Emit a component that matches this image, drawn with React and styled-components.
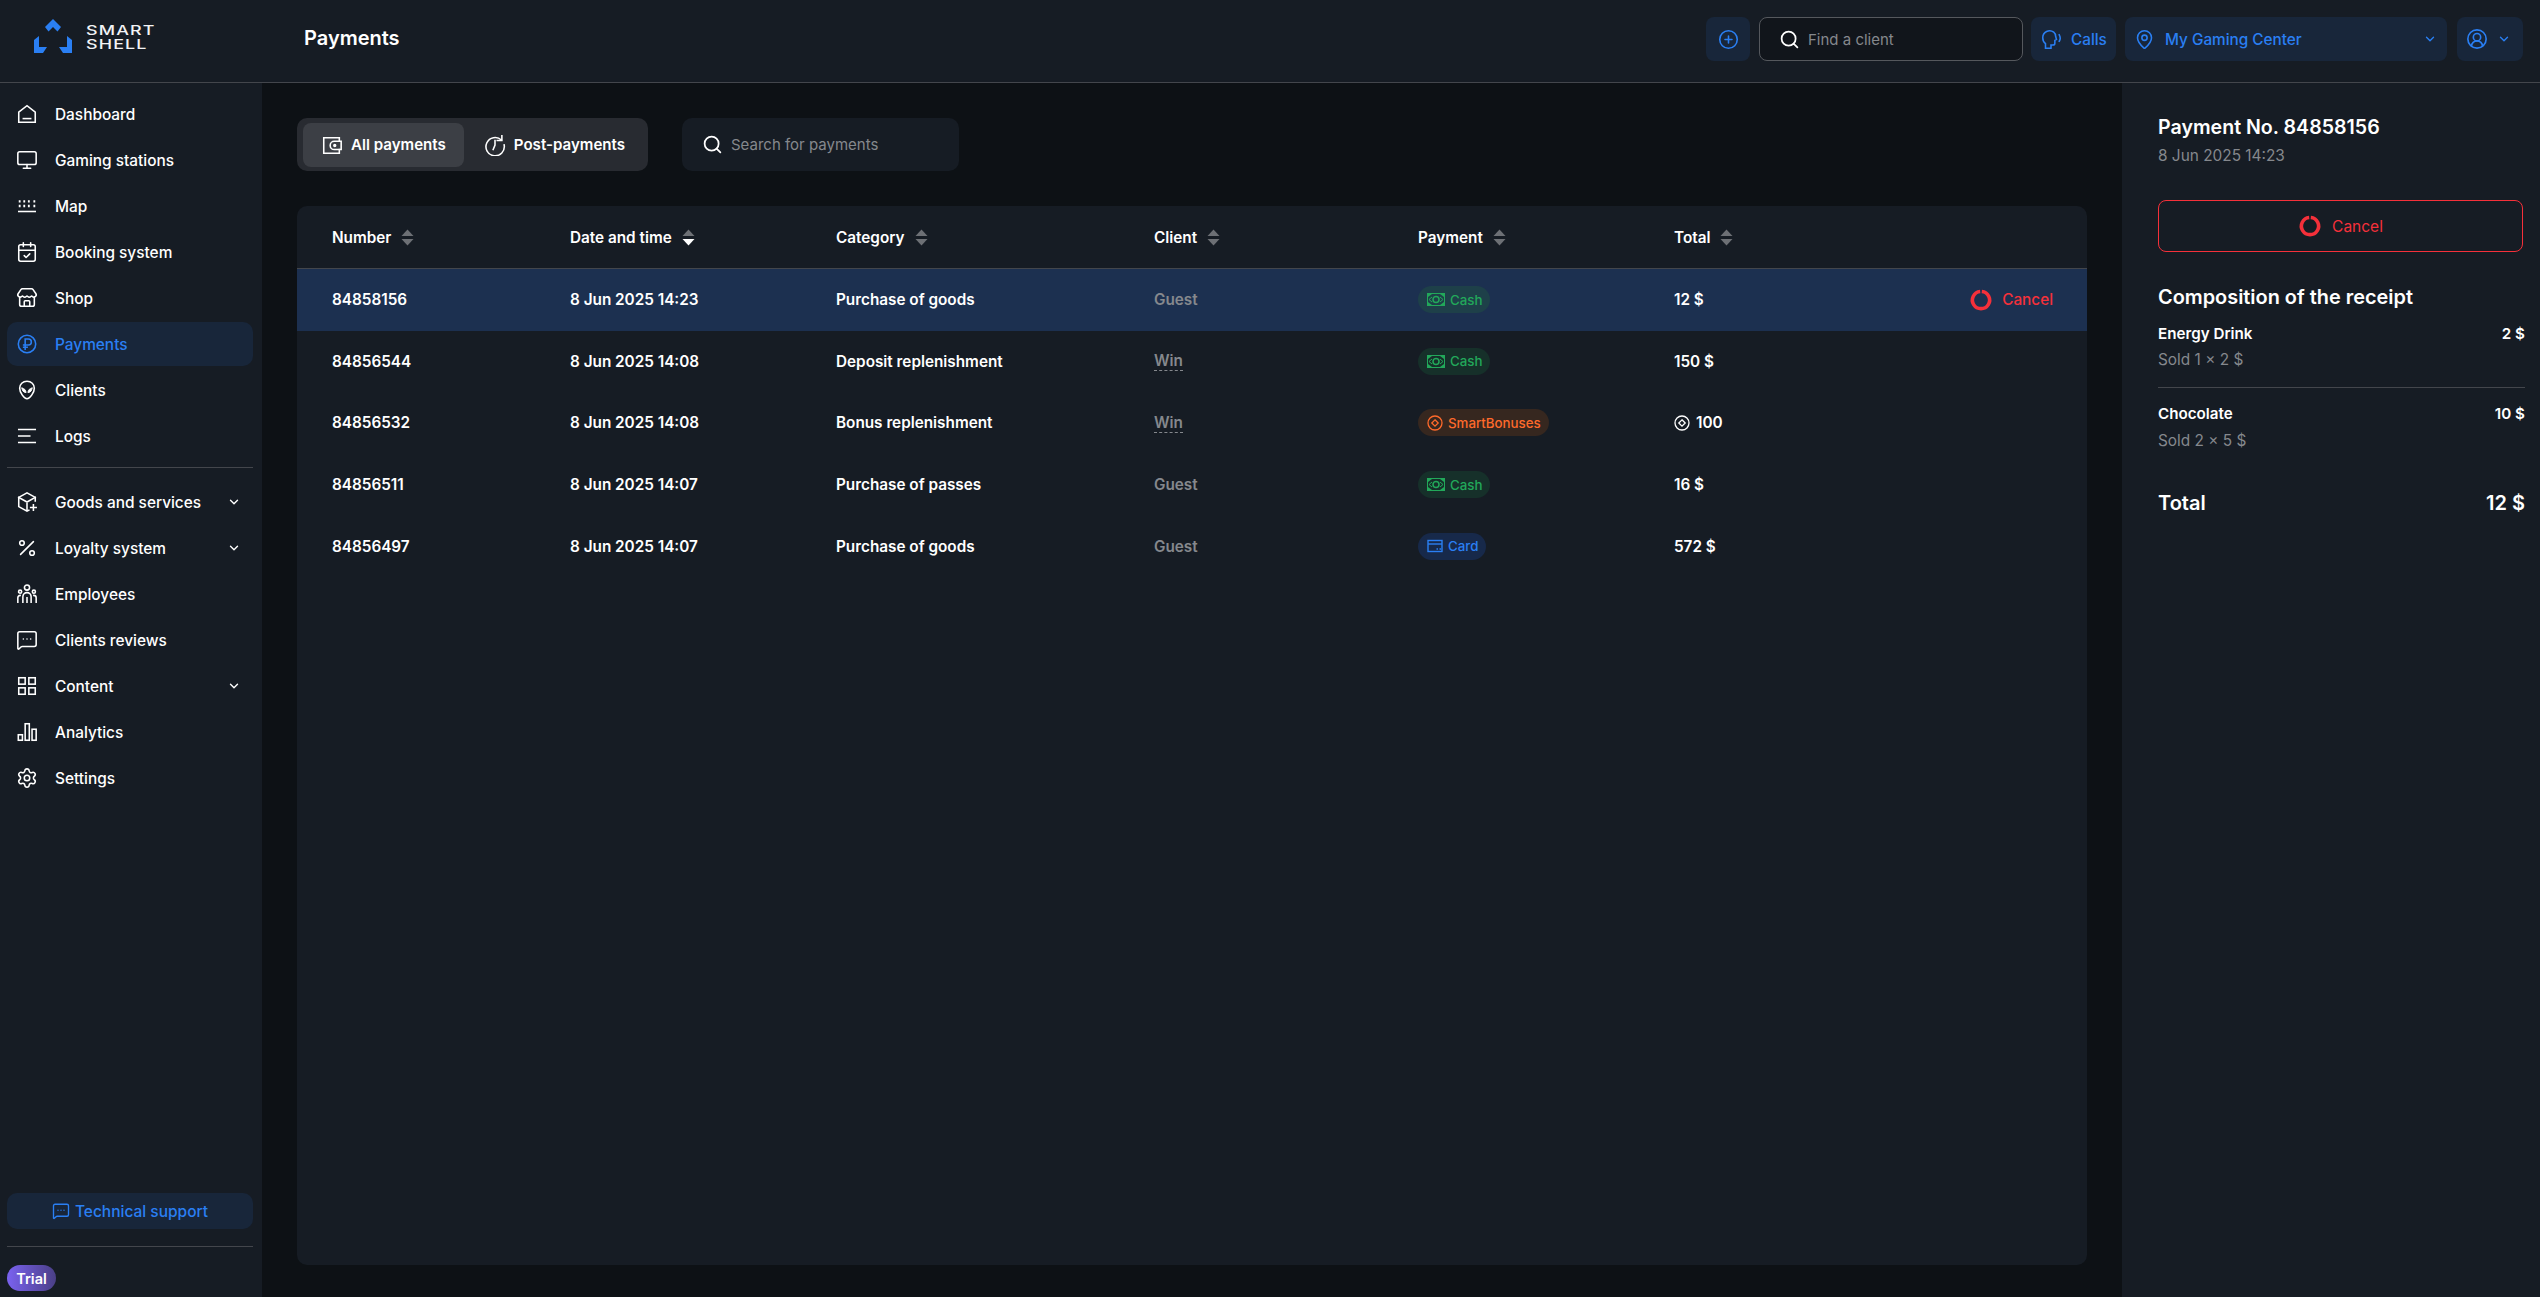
import styled, { createGlobalStyle } from "styled-components";
import {
  Monitor,
  CalendarCheck,
  Store,
  Percent,
  MessageSquareMore,
  Settings,
  ChevronDown,
  Search,
  CirclePlus,
  MapPin,
  CircleUserRound,
} from "lucide-react";

const GlobalStyle = createGlobalStyle`
  html, body, #root {
    margin: 0;
    height: 100%;
  }
  body {
    background: #0d1115;
    color: #fff;
    font-family: Inter, "Noto Sans", sans-serif;
    font-weight: 500;
    font-size: 15px;
    overflow: hidden;
  }
  * {
    box-sizing: border-box;
  }
`;

const BLUE = "#2a7ff3";
const RED = "#f5303a";
const GREEN = "#22a85a";
const ORANGE = "#ff6a2b";
const SURFACE = "#161c24";

const Page = styled.div`
  display: flex;
  flex-direction: column;
  height: 1297px;
`;

const Header = styled.header`
  display: flex;
  align-items: center;
  height: 83px;
  flex: none;
  padding: 0 17px 4px 0;
  background: ${SURFACE};
  border-bottom: 1px solid #43464c;
`;

const LogoBox = styled.div`
  display: flex;
  align-items: center;
  gap: 13px;
  width: 304px;
  padding: 0 0 6px 33px;
`;

const LogoText = styled.div`
  margin-top: 3px;
  font-size: 12.6px;
  line-height: 14px;
  font-weight: 500;
  letter-spacing: 0.8px;
  color: #f2f3f5;
  transform: scaleX(1.42);
  transform-origin: left center;
`;

const PageTitle = styled.h1`
  flex: 1;
  margin: 0 0 3px;
  font-size: 20px;
  font-weight: 600;
`;

const HeaderTools = styled.div`
  display: flex;
  align-items: center;
`;

const BlueButton = styled.div`
  display: flex;
  align-items: center;
  height: 44px;
  width: ${({ $w }) => $w}px;
  margin-left: ${({ $ml }) => $ml}px;
  padding-left: ${({ $pl }) => $pl}px;
  gap: ${({ $gap }) => $gap || 0}px;
  background: #18263a;
  border-radius: 8px;
  color: ${BLUE};
  font-size: 15.3px;
`;

const GrowLabel = styled.span`
  flex: 1;
`;

const ClientSearch = styled.div`
  display: flex;
  align-items: center;
  gap: 8px;
  width: 264px;
  height: 44px;
  margin-left: 9px;
  padding-left: 19px;
  background: #11151b;
  border: 1px solid #55585d;
  border-radius: 8px;
`;

const FieldInput = styled.input`
  flex: 1;
  min-width: 0;
  padding: 0;
  background: transparent;
  border: none;
  outline: none;
  color: #fff;
  font: inherit;
  font-weight: 400;
  &::placeholder {
    color: #85888d;
    opacity: 1;
  }
`;

const Body = styled.div`
  display: flex;
  flex: 1;
  min-height: 0;
`;

const Sidebar = styled.nav`
  display: flex;
  flex-direction: column;
  flex: none;
  width: 262px;
  padding: 9px 9px 6px 7px;
  background: ${SURFACE};
`;

const NavItem = styled.div`
  display: flex;
  align-items: center;
  gap: 17px;
  height: 44px;
  margin-bottom: 2px;
  padding: 0 9px;
  border-radius: 10px;
  font-size: 15.4px;
  color: ${({ $active }) => ($active ? BLUE : "#fff")};
  background: ${({ $active }) => ($active ? "#18263a" : "transparent")};
`;

const NavLabel = styled.span`
  flex: 1;
`;

const NavChevron = styled(ChevronDown)`
  margin-right: 3px;
`;

const NavRule = styled.hr`
  width: 100%;
  height: 1px;
  flex: none;
  margin: ${({ $m }) => $m};
  background: #43464c;
  border: none;
`;

const SupportButton = styled.div`
  display: flex;
  align-items: center;
  justify-content: center;
  gap: 5px;
  height: 36px;
  margin-top: auto;
  background: #18263a;
  border-radius: 10px;
  color: ${BLUE};
  font-size: 15.5px;
`;

const TrialBadge = styled.div`
  display: flex;
  align-items: center;
  justify-content: center;
  width: 49px;
  height: 26px;
  background: linear-gradient(90deg, #7a62f0, #4a3f86);
  border-radius: 13px;
  font-size: 14.5px;
  font-weight: 600;
`;

const Main = styled.main`
  display: flex;
  flex-direction: column;
  flex: 1;
  min-width: 0;
  padding: 35px;
  padding-bottom: 32px;
`;

const Toolbar = styled.div`
  display: flex;
  gap: 34px;
  margin-bottom: 35px;
`;

const TabGroup = styled.div`
  display: flex;
  align-items: center;
  gap: 2px;
  width: 351px;
  height: 53px;
  padding: 0 6px;
  background: #282b31;
  border-radius: 10px;
`;

const Tab = styled.div`
  display: flex;
  align-items: center;
  gap: 8px;
  height: 44px;
  padding: 0 18px;
  background: ${({ $active }) => ($active ? "#3c3f45" : "transparent")};
  border-radius: 8px;
  font-size: 15.1px;
  font-weight: 600;
  white-space: nowrap;
`;

const PaymentSearch = styled.div`
  display: flex;
  align-items: center;
  gap: 8px;
  width: 277px;
  height: 53px;
  padding-left: 20px;
  background: ${SURFACE};
  border-radius: 10px;
`;

const TableCard = styled.section`
  flex: 1;
  background: ${SURFACE};
  border-radius: 10px;
  overflow: hidden;
`;

const Row = styled.div`
  display: grid;
  grid-template-columns: 238px 266px 318px 264px 256px 200px 1fr;
  align-items: center;
  height: ${({ $h }) => $h || 61.6}px;
  padding: 0 34px 0 35px;
  background: ${({ $selected }) => ($selected ? "#1c3050" : "transparent")};
  font-size: 15.3px;
  font-weight: 600;
`;

const HeadRow = styled(Row)`
  border-bottom: 1px solid #43464c;
`;

const HeadCell = styled.div`
  display: flex;
  align-items: center;
  gap: 10px;
`;

const ClientText = styled.span`
  justify-self: start;
  color: #85888d;
  border-bottom: ${({ $dashed }) => ($dashed ? "1px dashed #85888d" : "none")};
`;

const Pill = styled.span`
  display: inline-flex;
  align-items: center;
  justify-self: start;
  gap: 5px;
  height: 27px;
  padding: 0 8px 0 9px;
  background: ${({ $bg }) => $bg};
  border-radius: 14px;
  color: ${({ $color }) => $color};
  font-size: 13.3px;
  font-weight: 500;
`;

const Amount = styled.span`
  display: flex;
  align-items: center;
  gap: 6px;
`;

const RowCancel = styled.span`
  display: flex;
  align-items: center;
  justify-content: flex-end;
  gap: 9px;
  color: ${RED};
  font-size: 15.3px;
  font-weight: 500;
`;

const Panel = styled.aside`
  flex: none;
  width: 418px;
  padding: 29px 15px 0 36px;
  background: ${SURFACE};
`;

const PanelTitle = styled.div`
  font-size: 19.6px;
  line-height: 30px;
  font-weight: 600;
`;

const MutedLine = styled.div`
  margin-top: ${({ $mt }) => $mt || 0}px;
  color: #85888d;
  font-size: 15.4px;
  line-height: 22px;
  font-weight: 400;
`;

const CancelButton = styled.div`
  display: flex;
  align-items: center;
  justify-content: center;
  gap: 10px;
  width: 365px;
  height: 52px;
  margin-top: 33px;
  border: 1.5px solid ${RED};
  border-radius: 8px;
  color: ${RED};
  font-size: 15.5px;
  font-weight: 400;
`;

const SectionTitle = styled.div`
  margin: 31px 0 11px;
  font-size: 19.9px;
  line-height: 28px;
  font-weight: 600;
`;

const ReceiptLine = styled.div`
  display: flex;
  justify-content: space-between;
  font-size: 15.2px;
  line-height: 24px;
  font-weight: 600;
`;

const PanelRule = styled.hr`
  height: 1px;
  margin: 16px 0 14px;
  background: #43464c;
  border: none;
`;

const TotalLine = styled.div`
  display: flex;
  justify-content: space-between;
  margin-top: 36px;
  font-size: 20px;
  line-height: 30px;
  font-weight: 600;
`;

function Glyph({ size = 22, children, color = "currentColor", width = 1.7 }) {
  return (
    <svg
      width={size}
      height={size}
      viewBox="0 0 24 24"
      fill="none"
      stroke={color}
      strokeWidth={width}
      strokeLinecap="square"
      style={{ flex: "none" }}
    >
      {children}
    </svg>
  );
}

const HomeIcon = () => (
  <Glyph>
    <path d="M3 10 12 3l9 7v11H3z" />
    <path d="M8 17h8" />
  </Glyph>
);

const MapIcon = () => (
  <Glyph>
    <path d="M3 7h2M8 7h2M13 7h2M19 7h2M3 12h2M8 12h2M13 12h2M19 12h2" strokeWidth="2.6" strokeLinecap="butt" />
    <path d="M3 18h18" />
  </Glyph>
);

const RubleIcon = () => (
  <Glyph>
    <circle cx="12" cy="12" r="9.500" />
    <path d="M10 18.500V6.500h3.500a3.200 3.200 0 0 1 0 6.500H7.500M7.500 15.500H13" strokeLinecap="butt" />
  </Glyph>
);

const AlienIcon = () => (
  <Glyph>
    <path d="M12 2.500c4.700 0 8 3.200 8 7.500 0 5-5 11.500-8 11.500S4 15 4 10c0-4.300 3.300-7.500 8-7.500z" />
    <path d="M6.500 10c2.800.2 4.300 2 4.500 4.800-2.900-.1-4.300-2-4.500-4.800zM17.500 10c-2.800.2-4.300 2-4.500 4.800 2.900-.1 4.300-2 4.500-4.800z" fill="currentColor" strokeWidth="1" />
  </Glyph>
);

const LogsIcon = () => (
  <Glyph>
    <path d="M3 5h18M3 12h12M3 19h18" />
  </Glyph>
);

const BoxIcon = () => (
  <Glyph>
    <path d="M21 11V7l-9-5-9 5v10l9 5 2-1" />
    <path d="m3 7 9 5 9-5M12 12v9M19 15v6M16 18h6" />
  </Glyph>
);

const TeamIcon = () => (
  <Glyph>
    <circle cx="12" cy="5" r="2.800" />
    <circle cx="4.500" cy="9.500" r="1.700" />
    <circle cx="19.500" cy="9.500" r="1.700" />
    <path d="M7.500 21v-6a4.500 4.500 0 0 1 9 0v6M2 21v-5a2.500 2.500 0 0 1 2.500-2.500M22 21v-5a2.500 2.500 0 0 0-2.500-2.500M12 16v5" />
  </Glyph>
);

const GridIcon = () => (
  <Glyph>
    <rect x="3" y="3" width="7" height="7" />
    <rect x="14" y="3" width="7" height="7" />
    <rect x="3" y="14" width="7" height="7" />
    <rect x="14" y="14" width="7" height="7" />
  </Glyph>
);

const BarsIcon = () => (
  <Glyph>
    <rect x="2.500" y="15" width="4.500" height="6" />
    <rect x="10" y="3" width="4.500" height="18" />
    <rect x="17.500" y="9" width="4.500" height="12" />
  </Glyph>
);

const WalletIcon = () => (
  <Glyph>
    <path d="M20 8V4H3v17h17v-4" />
    <path d="M22 8h-7.500a4.500 4.500 0 0 0 0 9H22z" />
    <circle cx="15" cy="12.500" r="1" />
  </Glyph>
);

const HistoryIcon = () => (
  <Glyph>
    <path d="M19 6.500A10 10 0 1 0 22 12" />
    <path d="M19.500 2v5h-5M12 7v5l-2 5" />
  </Glyph>
);

const CallsIcon = () => (
  <Glyph>
    <path d="M3 10.500a7.500 7.500 0 0 1 12-6c1.300 1 2 2.700 2 4.500l1 3.500-1.800 1v3c0 1-.8 2-2 2H12V22H6v-5c-2-1.500-3-3.800-3-6.500z" />
    <path d="M21 7.500c1.300 2.300 1.300 5 0 7" />
  </Glyph>
);

const CashIcon = () => (
  <svg width="18" height="13" viewBox="0 0 18 13" style={{ flex: "none" }}>
    <rect x="0.500" y="0.500" width="17" height="12" fill="none" stroke="currentColor" />
    <path d="M1 1h4L1 4zM17 1h-4l4 3zM1 12h4l-4-3zM17 12h-4l4-3z" fill="currentColor" />
    <circle cx="9" cy="6.500" r="3" fill="none" stroke="currentColor" strokeWidth="1.500" />
    <path d="M2 6.500 5 4M2 6.500 5 9M16 6.500 13 4M16 6.500 13 9" stroke="currentColor" />
  </svg>
);

const BonusIcon = ({ size = 16 }) => (
  <svg width={size} height={size} viewBox="0 0 16 16" style={{ flex: "none" }}>
    <circle cx="8" cy="8" r="7" fill="none" stroke="currentColor" strokeWidth="1.300" />
    <path d="M8 4.800 11.200 8 8 11.200 4.800 8z" fill="none" stroke="currentColor" strokeWidth="1.300" />
  </svg>
);

const CardIcon = () => (
  <svg width="16" height="16" viewBox="0 0 16 16" style={{ flex: "none" }}>
    <rect x="1" y="2.500" width="14" height="11" fill="none" stroke="currentColor" strokeWidth="1.400" />
    <path d="M1 6h14" stroke="currentColor" strokeWidth="1.400" />
    <path d="M9.500 11h1.500M12.500 11H14" stroke="currentColor" strokeWidth="1.400" />
  </svg>
);

const Ring = () => (
  <svg width="24" height="24" viewBox="0 0 24 24" style={{ flex: "none" }}>
    <path d="M12.800 3.500A8.600 8.600 0 1 1 11.200 3.500" fill="none" stroke={RED} strokeWidth="3.600" />
  </svg>
);

const SortArrows = ({ down }) => (
  <svg width="13" height="17" viewBox="0 0 13 17" style={{ flex: "none" }}>
    <path d="M6.500 0.500 12.500 7H0.500z" fill="#6d7075" />
    <path d="M6.500 16.500 12.500 10H0.500z" fill={down ? "#fff" : "#6d7075"} />
  </svg>
);

const Logo = () => (
  <svg width="40" height="36" viewBox="0 0 40 36">
    <path d="M20 1 28 9 24.500 13.500 20 9 15.500 13.500 12 9z" fill={BLUE} />
    <path d="M1 22 6 18 6 29 14 29 10 35H1z" fill={BLUE} />
    <path d="M39 22 34 18 34 29 26 29 30 35H39z" fill={BLUE} />
  </svg>
);

const iconProps = { size: 22, strokeWidth: 1.7 };

const topItems = [
  { label: "Dashboard", icon: <HomeIcon /> },
  { label: "Gaming stations", icon: <Monitor {...iconProps} /> },
  { label: "Map", icon: <MapIcon /> },
  { label: "Booking system", icon: <CalendarCheck {...iconProps} /> },
  { label: "Shop", icon: <Store {...iconProps} /> },
  { label: "Payments", icon: <RubleIcon />, active: true },
  { label: "Clients", icon: <AlienIcon /> },
  { label: "Logs", icon: <LogsIcon /> },
];

const bottomItems = [
  { label: "Goods and services", icon: <BoxIcon />, more: true },
  { label: "Loyalty system", icon: <Percent {...iconProps} />, more: true },
  { label: "Employees", icon: <TeamIcon /> },
  { label: "Clients reviews", icon: <MessageSquareMore {...iconProps} /> },
  { label: "Content", icon: <GridIcon />, more: true },
  { label: "Analytics", icon: <BarsIcon /> },
  { label: "Settings", icon: <Settings {...iconProps} /> },
];

const columns = ["Number", "Date and time", "Category", "Client", "Payment", "Total"];

const CASH = { label: "Cash", color: GREEN, bg: "#16302a", icon: <CashIcon /> };

const payments = [
  { id: "84858156", date: "8 Jun 2025 14:23", cat: "Purchase of goods", client: "Guest", pay: { ...CASH, bg: "#1e4049" }, total: "12 $", selected: true },
  { id: "84856544", date: "8 Jun 2025 14:08", cat: "Deposit replenishment", client: "Win", pay: CASH, total: "150 $" },
  { id: "84856532", date: "8 Jun 2025 14:08", cat: "Bonus replenishment", client: "Win", pay: { label: "SmartBonuses", color: ORANGE, bg: "#36271f", icon: <BonusIcon /> }, total: "100", bonus: true },
  { id: "84856511", date: "8 Jun 2025 14:07", cat: "Purchase of passes", client: "Guest", pay: CASH, total: "16 $" },
  { id: "84856497", date: "8 Jun 2025 14:07", cat: "Purchase of goods", client: "Guest", pay: { label: "Card", color: BLUE, bg: "#17294a", icon: <CardIcon /> }, total: "572 $" },
];

function SideLink({ item }) {
  return (
    <NavItem $active={item.active}>
      {item.icon}
      <NavLabel>{item.label}</NavLabel>
      {item.more && <NavChevron size={14} strokeWidth={2.4} />}
    </NavItem>
  );
}

function App() {
  return (
    <Page>
      <GlobalStyle />
      <Header>
        <LogoBox>
          <Logo />
          <LogoText>
            SMART
            <br />
            SHELL
          </LogoText>
        </LogoBox>
        <PageTitle>Payments</PageTitle>
        <HeaderTools>
          <BlueButton $w={44} $pl={12}>
            <CirclePlus size={21} strokeWidth={1.8} />
          </BlueButton>
          <ClientSearch>
            <Search size={21} strokeWidth={2} />
            <FieldInput placeholder="Find a client" />
          </ClientSearch>
          <BlueButton $w={85} $ml={8} $pl={9} $gap={9}>
            <CallsIcon />
            <span>Calls</span>
          </BlueButton>
          <BlueButton $w={322} $ml={9} $pl={9} $gap={10}>
            <MapPin size={21} strokeWidth={1.8} />
            <GrowLabel>My Gaming Center</GrowLabel>
            <ChevronDown size={14} strokeWidth={2.4} />
            <span />
          </BlueButton>
          <BlueButton $w={66} $ml={10} $pl={9} $gap={9}>
            <CircleUserRound size={22} strokeWidth={1.8} />
            <ChevronDown size={14} strokeWidth={2.4} />
          </BlueButton>
        </HeaderTools>
      </Header>
      <Body>
        <Sidebar>
          {topItems.map((item) => (
            <SideLink key={item.label} item={item} />
          ))}
          <NavRule $m="7px 0 12px" />
          {bottomItems.map((item) => (
            <SideLink key={item.label} item={item} />
          ))}
          <SupportButton>
            <MessageSquareMore size={18} strokeWidth={1.8} />
            Technical support
          </SupportButton>
          <NavRule $m="17px 0 18px" />
          <TrialBadge>Trial</TrialBadge>
        </Sidebar>
        <Main>
          <Toolbar>
            <TabGroup>
              <Tab $active>
                <WalletIcon />
                All payments
              </Tab>
              <Tab>
                <HistoryIcon />
                Post-payments
              </Tab>
            </TabGroup>
            <PaymentSearch>
              <Search size={21} strokeWidth={2} />
              <FieldInput placeholder="Search for payments" />
            </PaymentSearch>
          </Toolbar>
          <TableCard>
            <HeadRow $h={63}>
              {columns.map((name) => (
                <HeadCell key={name}>
                  {name}
                  <SortArrows down={name === "Date and time"} />
                </HeadCell>
              ))}
            </HeadRow>
            {payments.map((p) => (
              <Row key={p.id} $selected={p.selected}>
                <span>{p.id}</span>
                <span>{p.date}</span>
                <span>{p.cat}</span>
                <ClientText $dashed={p.client === "Win"}>{p.client}</ClientText>
                <Pill $bg={p.pay.bg} $color={p.pay.color}>
                  {p.pay.icon}
                  {p.pay.label}
                </Pill>
                <Amount>
                  {p.bonus && <BonusIcon />}
                  {p.total}
                </Amount>
                {p.selected && (
                  <RowCancel>
                    <Ring />
                    Cancel
                  </RowCancel>
                )}
              </Row>
            ))}
          </TableCard>
        </Main>
        <Panel>
          <PanelTitle>Payment No. 84858156</PanelTitle>
          <MutedLine $mt={3}>8 Jun 2025 14:23</MutedLine>
          <CancelButton>
            <Ring />
            Cancel
          </CancelButton>
          <SectionTitle>Composition of the receipt</SectionTitle>
          <ReceiptLine>
            <span>Energy Drink</span>
            <span>2 $</span>
          </ReceiptLine>
          <MutedLine $mt={3}>Sold 1 × 2 $</MutedLine>
          <PanelRule />
          <ReceiptLine>
            <span>Chocolate</span>
            <span>10 $</span>
          </ReceiptLine>
          <MutedLine $mt={4}>Sold 2 × 5 $</MutedLine>
          <TotalLine>
            <span>Total</span>
            <span>12 $</span>
          </TotalLine>
        </Panel>
      </Body>
    </Page>
  );
}

export default App;
